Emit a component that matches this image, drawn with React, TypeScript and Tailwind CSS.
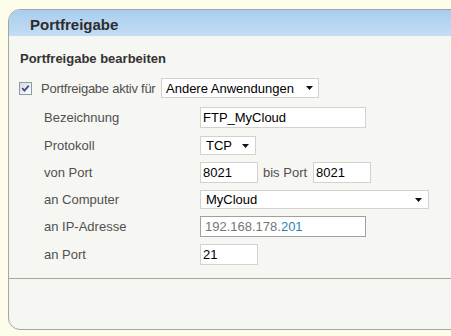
import React from "react";

function Arrow() {
  return (
    <svg width="7" height="4" viewBox="0 0 7 4" className="shrink-0">
      <path d="M0 0 L7 0 L3.5 4 Z" fill="#111" />
    </svg>
  );
}

function SelectBox({ value, width }: { value: string; width: string }) {
  return (
    <div
      className={`${width} h-[19px] flex items-center justify-between pl-[5px] pr-[6px] bg-white border border-[#d2d2ce] text-[13px] text-black`}
    >
      <span className="pt-[1px]">{value}</span>
      <Arrow />
    </div>
  );
}

function TextBox({ value, width }: { value: string; width: string }) {
  return (
    <div
      className={`${width} h-[21px] flex items-center pl-[2px] bg-white border border-[#d2d2ce] text-[13px] text-black`}
    >
      <span className="pt-[1px]">{value}</span>
    </div>
  );
}

function Row({ label, mt, children }: { label: string; mt: string; children: React.ReactNode }) {
  return (
    <div className={`flex items-center h-[21px] shrink-0 pl-[35px] ${mt}`}>
      <div className="w-[156px] pt-[1px] text-[13px] text-[#505050]">{label}</div>
      {children}
    </div>
  );
}

export default function App() {
  return (
    <div
      className="w-[451px] h-[336px] overflow-hidden bg-[#fdfde9] pt-[9px] pl-[8px]"
      style={{ fontFamily: '"Liberation Sans", Arial, sans-serif' }}
    >
      <div className="w-[460px] h-[321px] flex flex-col bg-[#f6f6f2] border border-[#a1a9a1] rounded-l-[12px] overflow-hidden">
        <div className="h-[26px] shrink-0 bg-gradient-to-b from-[#a9cdee] to-[#c3ddf4] pl-[21px] pt-[6px] text-[15px] leading-[17px] font-bold text-[#2d2d2d]">
          Portfreigabe
        </div>

        <div className="mt-[15px] pl-[11px] text-[13px] leading-[15px] font-bold text-[#333]">
          Portfreigabe bearbeiten
        </div>

        <div className="mt-[12px] h-[20px] shrink-0 flex items-center pl-[10px]">
          <div className="w-[13px] h-[13px] border border-[#8c99a6] bg-gradient-to-br from-[#dcdcd6] to-white flex items-center justify-center">
            <svg width="9" height="9" viewBox="0 0 9 9">
              <path d="M1.2 4.2 L3.4 6.6 L7.8 1.6" stroke="#3c4f9e" strokeWidth="1.8" fill="none" />
            </svg>
          </div>
          <div className="ml-[9px] w-[120px] pt-[1px] text-[13px] tracking-[-0.25px] whitespace-nowrap text-[#505050]">
            Portfreigabe aktiv für
          </div>
          <div className="w-[158px] h-[20px] flex items-center justify-between pl-[4px] pr-[5px] bg-white border border-[#d2d2ce] text-[13px] text-black">
            <span className="pt-[1px]">Andere Anwendungen</span>
            <Arrow />
          </div>
        </div>

        <Row label="Bezeichnung" mt="mt-[9px]">
          <TextBox value="FTP_MyCloud" width="w-[166px]" />
        </Row>
        <Row label="Protokoll" mt="mt-[7px]">
          <SelectBox value="TCP" width="w-[56px]" />
        </Row>
        <Row label="von Port" mt="mt-[6px]">
          <TextBox value="8021" width="w-[58px]" />
          <span className="ml-[5px] w-[50px] pt-[1px] text-[13px] text-[#505050]">bis Port</span>
          <TextBox value="8021" width="w-[58px]" />
        </Row>
        <Row label="an Computer" mt="mt-[6px]">
          <SelectBox value="MyCloud" width="w-[229px]" />
        </Row>
        <Row label="an IP-Adresse" mt="mt-[6px]">
          <div className="w-[166px] h-[21px] flex items-center pl-[4px] bg-white border border-[#a0a0a0] text-[13px] text-[#777]">
            <span className="pt-[1px]">
              192.168.178.<span className="text-[#2f86ad]">201</span>
            </span>
          </div>
        </Row>
        <Row label="an Port" mt="mt-[7px]">
          <TextBox value="21" width="w-[58px]" />
        </Row>

        <div className="mt-[13px] shrink-0 border-t border-[#a1a9a1]" />
        <div className="flex-1" />
      </div>
    </div>
  );
}
